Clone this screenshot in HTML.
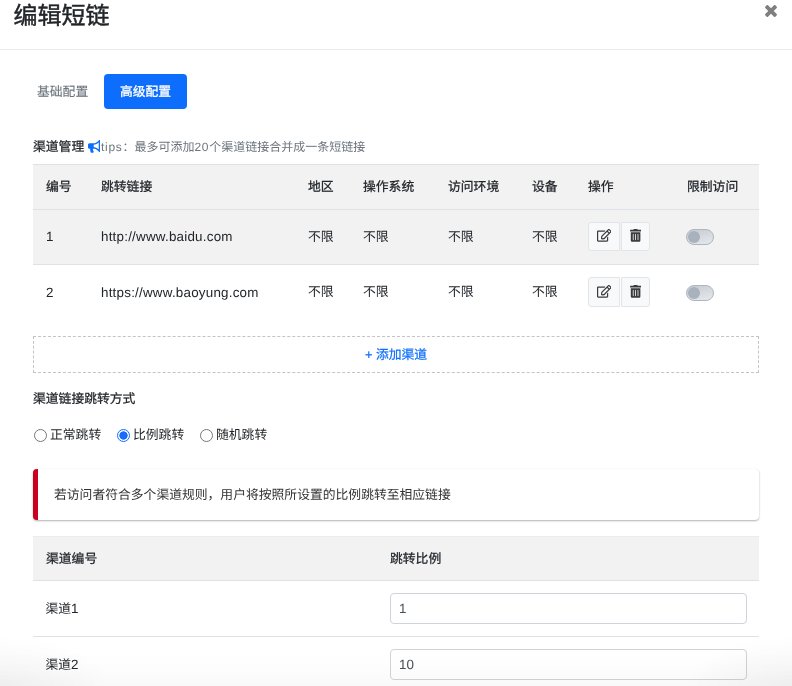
<!DOCTYPE html>
<html lang="zh-CN">
<head>
<meta charset="utf-8">
<title>编辑短链</title>
<style>
*{box-sizing:border-box;margin:0;padding:0}
html,body{width:792px;height:686px;overflow:hidden;background:#fff}
body{position:relative;text-rendering:geometricPrecision;font-family:"Liberation Sans",sans-serif;font-size:12.8px;color:#212529;line-height:1}
#w{position:absolute;left:0;top:0;width:792px;height:686px;will-change:transform}
.abs{position:absolute;white-space:nowrap}
.title{left:13.5px;top:2.8px;font-size:24px;line-height:28px;color:#212529;-webkit-text-stroke:.45px #212529}
.close{left:765px;top:5px;width:12px;height:12px}
.hr{left:0;top:49px;width:792px;height:1px;background:#e9ecef}
.tab1{left:37px;top:83px;line-height:18px;color:#6c757d;-webkit-text-stroke:.12px #6c757d}
.tab2{left:104px;top:74px;width:83px;height:35px;border-radius:4px;background:#0d6efd;color:#fff;-webkit-text-stroke:.3px #fff;text-align:center;line-height:36px}
.lbl{color:#212529;line-height:18px;-webkit-text-stroke:.25px #212529}
.tips{font-size:12px;color:#6c757d;line-height:18px}
.tips b{font-weight:normal;letter-spacing:.7px}
table{position:absolute;border-collapse:collapse;table-layout:fixed}
th,td{text-align:left;vertical-align:middle;padding:0 0 0 13px;font-weight:normal;white-space:nowrap;border-top:1px solid #dee2e6}
th{color:#212529;-webkit-text-stroke:.25px #212529}
.t1{left:33px;top:164px;width:726px}
.lat{font-size:13.4px;letter-spacing:.22px}
.t1 th{height:45px;background:#f2f2f2}
.t1 td{height:55px}
.t1 tr.odd td{background:#f2f2f2}
.t1 tr.r2 td{height:56px}
.t1 tr.r2 .btns{top:-.5px}
.t1 tr.r2 .btn{height:30px}
.t1 tr.r2 .btn svg{top:-.7px}
.t2{left:33px;top:536px;width:726px}
.t2 th{height:44px;background:#f2f2f2;border-top:1px solid #e9ecef;padding-top:2px}
.t2 td:first-child{padding-left:12.5px}
.t2 td{height:56px}
.btns{display:flex;position:relative;top:-1px}
.btn{width:32px;height:29px;border:1px solid #e2e5e8;background:#f8f9fa;border-radius:3px 0 0 3px;display:flex;align-items:center;justify-content:center}
.btn svg{position:relative;top:-.6px}
.btn+.btn{margin-left:1px;width:29px;border-radius:0 3px 3px 0}
.sw{display:block;width:28px;height:16px;border-radius:8px;border:1px solid #adb6c1;background:linear-gradient(165deg,#c6cbd1,#e6e9ec);position:relative;margin-left:-1px}
.sw i{position:absolute;left:1px;top:1px;width:12px;height:12px;border-radius:50%;background:#a9b1bc}
.add{left:33px;top:336px;width:726px;height:37px;border:1px dashed #c4c4c4;color:#0d6efd;-webkit-text-stroke:.22px #0d6efd;text-align:center;line-height:35px}
.radio{width:13px;height:13px;border-radius:50%;border:1px solid #767676;background:#fff}
.radio.on{border:1.5px solid #0d6efd;background:radial-gradient(circle at center,#1a6bf7 0,#1a6bf7 3.8px,#fff 4.5px)}
.rl{line-height:18px;color:#212529}
.alert{left:33px;top:469px;width:726px;height:51px;border-left:5px solid #cb0020;border-radius:4px;background:#fff;box-shadow:0 1px 2px rgba(0,0,0,.3),0 0 1px rgba(0,0,0,.1);padding-left:16px;line-height:51px;color:#333}
.inp{display:block;width:357px;height:31px;border:1px solid #ced4da;border-radius:4px;background:#fff;padding-left:8px;line-height:29px;color:#495057;font-size:13.4px}
.shade{left:0;top:636px;width:792px;height:50px;background:radial-gradient(ellipse 110px 50px at 0 100%,rgba(0,0,0,.045),rgba(0,0,0,0) 100%),radial-gradient(ellipse 110px 50px at 100% 100%,rgba(0,0,0,.045),rgba(0,0,0,0) 100%),linear-gradient(180deg,rgba(0,0,0,0) 30%,rgba(0,0,0,.006) 65%,rgba(0,0,0,.025) 100%);pointer-events:none}
</style>
</head>
<body>
<div id="w">
<div class="abs title">编辑短链</div>
<svg class="abs close" viewBox="110 366 1188 1188"><path fill="#7f7f7f" d="M1298 1322C1298 1297 1288 1272 1270 1254L976 960L1270 666C1288 648 1298 623 1298 598C1298 573 1288 548 1270 530L1134 394C1116 376 1091 366 1066 366C1041 366 1016 376 998 394L704 688L410 394C392 376 367 366 342 366C317 366 292 376 274 394L138 530C120 548 110 573 110 598C110 623 120 648 138 666L432 960L138 1254C120 1272 110 1297 110 1322C110 1347 120 1372 138 1390L274 1526C292 1544 317 1554 342 1554C367 1554 392 1544 410 1526L704 1232L998 1526C1016 1544 1041 1554 1066 1554C1091 1554 1116 1544 1134 1526L1270 1390C1288 1372 1298 1347 1298 1322Z"/></svg>
<div class="abs hr"></div>

<div class="abs tab1">基础配置</div>
<div class="abs tab2">高级配置</div>

<div class="abs lbl" style="left:33px;top:138px">渠道管理</div>
<svg class="abs" style="left:87.5px;top:140px;width:12.9px;height:12.8px" viewBox="0 0 576 512" preserveAspectRatio="none"><path fill="#0d6efd" d="M576 240c0-23.630-12.950-44.040-32-55.120V32.010C544 23.260 537.020 0 512 0c-7.120 0-14.190 2.380-19.980 7.020l-85.030 68.030C364.280 109.190 310.660 128 256 128H64c-35.350 0-64 28.650-64 64v96c0 35.350 28.650 64 64 64h33.700c-1.390 10.480-2.180 21.140-2.180 32 0 39.770 9.260 77.350 25.560 110.940 5.190 10.690 16.520 17.060 28.400 17.060h74.280c26.050 0 41.690-29.840 25.900-50.560-16.400-21.520-26.150-48.360-26.150-77.440 0-11.110 1.620-21.790 4.410-32H256c54.660 0 108.280 18.810 150.980 52.950l85.030 68.030a32.023 32.023 0 0 0 19.980 7.020c24.920 0 32-22.780 32-32V295.130C563.050 284.040 576 263.630 576 240zm-96 141.420l-33.050-26.440C392.950 311.780 325.120 288 256 288v-96c69.120 0 136.950-23.780 190.950-66.980L480 98.580v282.840z"/></svg>
<div class="abs tips" style="left:101px;top:138px"><b>tips</b>：最多可添加<b>20</b>个渠道链接合并成一条短链接</div>

<table class="t1">
<colgroup><col style="width:55px"><col style="width:207px"><col style="width:55px"><col style="width:85px"><col style="width:84px"><col style="width:56px"><col style="width:99px"><col style="width:85px"></colgroup>
<tr><th>编号</th><th>跳转链接</th><th>地区</th><th>操作系统</th><th>访问环境</th><th>设备</th><th>操作</th><th>限制访问</th></tr>
<tr class="odd"><td class="lat">1</td><td class="lat">http://www.baidu.com</td><td>不限</td><td>不限</td><td>不限</td><td>不限</td>
<td><div class="btns"><span class="btn"><svg width="14.4" height="12.8" viewBox="0 0 576 512"><path fill="#3a3a3a" d="M402.300 344.900l32-32c5-5 13.700-1.500 13.700 5.700V464c0 26.500-21.500 48-48 48H48c-26.500 0-48-21.500-48-48V112c0-26.500 21.500-48 48-48h273.500c7.100 0 10.700 8.600 5.700 13.700l-32 32c-1.500 1.500-3.500 2.300-5.700 2.300H48v352h352V350.500c0-2.100.800-4.100 2.300-5.600zm156.600-201.800L296.300 405.700l-90.400 10c-26.200 2.900-48.500-19.200-45.600-45.600l10-90.400L432.900 17.100c22.900-22.900 59.900-22.900 82.700 0l43.200 43.200c22.900 22.900 22.900 60 .100 82.800zM460.100 174L402 115.900 216.200 301.800l-7.300 65.300 65.300-7.300L460.100 174zm64.800-79.700l-43.200-43.200c-4.100-4.100-10.800-4.100-14.800 0L436 82l58.100 58.100 30.900-30.900c4-4.200 4-10.800-.100-14.900z"/></svg></span><span class="btn"><svg width="11.2" height="12.8" viewBox="0 0 448 512"><path fill="#3a3a3a" d="M32 464a48 48 0 0 0 48 48h288a48 48 0 0 0 48-48V128H32zm272-256a16 16 0 0 1 32 0v224a16 16 0 0 1-32 0zm-96 0a16 16 0 0 1 32 0v224a16 16 0 0 1-32 0zm-96 0a16 16 0 0 1 32 0v224a16 16 0 0 1-32 0zM432 32H312l-9.400-18.700A24 24 0 0 0 281.100 0H166.800a23.720 23.720 0 0 0-21.400 13.300L136 32H16A16 16 0 0 0 0 48v32a16 16 0 0 0 16 16h416a16 16 0 0 0 16-16V48a16 16 0 0 0-16-16z"/></svg></span></div></td>
<td><span class="sw"><i></i></span></td></tr>
<tr class="r2"><td class="lat">2</td><td class="lat">https://www.baoyung.com</td><td>不限</td><td>不限</td><td>不限</td><td>不限</td>
<td><div class="btns"><span class="btn"><svg width="14.4" height="12.8" viewBox="0 0 576 512"><path fill="#3a3a3a" d="M402.300 344.900l32-32c5-5 13.700-1.500 13.700 5.700V464c0 26.500-21.500 48-48 48H48c-26.500 0-48-21.500-48-48V112c0-26.500 21.500-48 48-48h273.500c7.100 0 10.700 8.600 5.700 13.700l-32 32c-1.500 1.500-3.500 2.300-5.700 2.300H48v352h352V350.500c0-2.100.800-4.100 2.300-5.600zm156.600-201.800L296.300 405.700l-90.400 10c-26.200 2.900-48.500-19.200-45.600-45.600l10-90.400L432.900 17.100c22.900-22.900 59.900-22.900 82.700 0l43.200 43.200c22.900 22.900 22.900 60 .100 82.800zM460.100 174L402 115.900 216.200 301.800l-7.300 65.300 65.300-7.300L460.100 174zm64.800-79.700l-43.200-43.200c-4.100-4.100-10.800-4.100-14.800 0L436 82l58.100 58.100 30.900-30.900c4-4.200 4-10.800-.100-14.900z"/></svg></span><span class="btn"><svg width="11.2" height="12.8" viewBox="0 0 448 512"><path fill="#3a3a3a" d="M32 464a48 48 0 0 0 48 48h288a48 48 0 0 0 48-48V128H32zm272-256a16 16 0 0 1 32 0v224a16 16 0 0 1-32 0zm-96 0a16 16 0 0 1 32 0v224a16 16 0 0 1-32 0zm-96 0a16 16 0 0 1 32 0v224a16 16 0 0 1-32 0zM432 32H312l-9.400-18.700A24 24 0 0 0 281.100 0H166.800a23.720 23.720 0 0 0-21.400 13.300L136 32H16A16 16 0 0 0 0 48v32a16 16 0 0 0 16 16h416a16 16 0 0 0 16-16V48a16 16 0 0 0-16-16z"/></svg></span></div></td>
<td><span class="sw"><i></i></span></td></tr>
</table>

<div class="abs add">+ 添加渠道</div>

<div class="abs lbl" style="left:33px;top:390px">渠道链接跳转方式</div>

<div class="abs radio" style="left:34px;top:429px"></div>
<div class="abs rl" style="left:50px;top:426px">正常跳转</div>
<div class="abs radio on" style="left:117px;top:429px"></div>
<div class="abs rl" style="left:133px;top:426px">比例跳转</div>
<div class="abs radio" style="left:200px;top:429px"></div>
<div class="abs rl" style="left:216px;top:426px">随机跳转</div>

<div class="abs alert">若访问者符合多个渠道规则，用户将按照所设置的比例跳转至相应链接</div>

<table class="t2">
<colgroup><col style="width:344px"><col style="width:382px"></colgroup>
<tr><th>渠道编号</th><th>跳转比例</th></tr>
<tr><td>渠道<span class="lat">1</span></td><td><span class="inp">1</span></td></tr>
<tr><td>渠道<span class="lat">2</span></td><td><span class="inp">10</span></td></tr>
</table>

<div class="abs shade"></div>
</div>
</body>
</html>
